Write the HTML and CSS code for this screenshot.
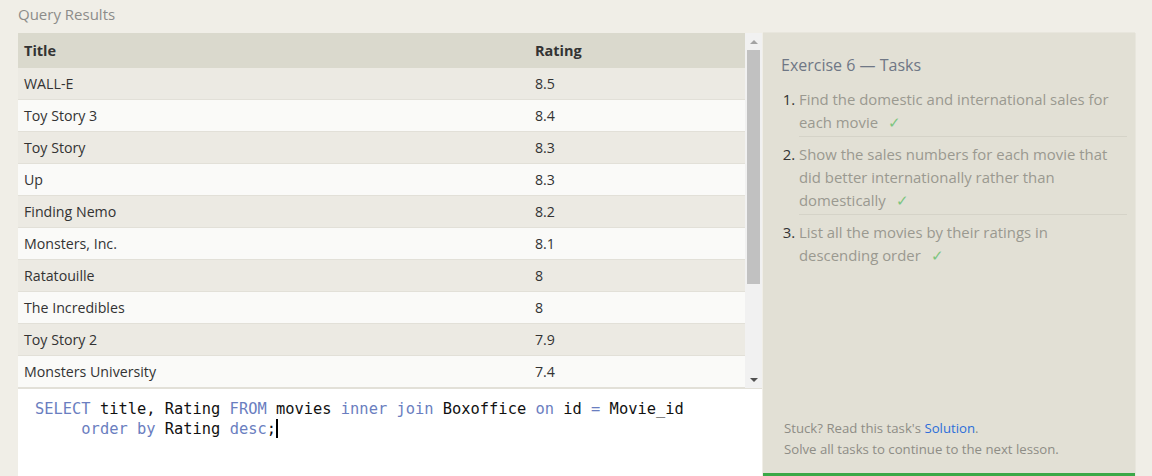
FILE: index.html
```html
<!DOCTYPE html>
<html>
<head>
<meta charset="utf-8">
<link rel="stylesheet" href="styles.css">
</head>
<body>
<div class="page">
  <div class="section-title">Query Results</div>
  <div class="main">
    <div class="left">
      <div class="results">
        <div class="table-wrap">
          <table class="results-table">
            <thead>
              <tr><th class="col-title">Title</th><th>Rating</th></tr>
            </thead>
            <tbody>
              <tr><td>WALL-E</td><td>8.5</td></tr>
              <tr><td>Toy Story 3</td><td>8.4</td></tr>
              <tr><td>Toy Story</td><td>8.3</td></tr>
              <tr><td>Up</td><td>8.3</td></tr>
              <tr><td>Finding Nemo</td><td>8.2</td></tr>
              <tr><td>Monsters, Inc.</td><td>8.1</td></tr>
              <tr><td>Ratatouille</td><td>8</td></tr>
              <tr><td>The Incredibles</td><td>8</td></tr>
              <tr><td>Toy Story 2</td><td>7.9</td></tr>
              <tr><td>Monsters University</td><td>7.4</td></tr>
            </tbody>
          </table>
        </div>
        <div class="scrollbar">
          <div class="arrow arrow-up"></div>
          <div class="track"><div class="thumb"></div></div>
          <div class="arrow arrow-down"></div>
        </div>
      </div>
      <div class="editor">
<pre class="code"><span class="kw">SELECT</span> title, Rating <span class="kw">FROM</span> movies <span class="kw">inner join</span> Boxoffice <span class="kw">on</span> id <span class="kw">=</span> Movie_id
     <span class="kw">order by</span> Rating <span class="kw">desc</span>;<span class="cursor"></span></pre>
      </div>
    </div>
    <div class="panel">
      <div class="panel-body">
        <h2 class="panel-title">Exercise 6 — Tasks</h2>
        <ol class="tasks">
          <li>Find the domestic and international sales for each movie <span class="check">✓</span></li>
          <li>Show the sales numbers for each movie that did better internationally rather than domestically <span class="check">✓</span></li>
          <li>List all the movies by their ratings in descending order <span class="check">✓</span></li>
        </ol>
      </div>
      <div class="panel-foot">
        <div>Stuck? Read this task's <a class="link">Solution</a>.</div>
        <div>Solve all tasks to continue to the next lesson.</div>
      </div>
      <div class="progress"></div>
    </div>
  </div>
</div>
</body>
</html>
```
FILE: styles.css
```css
html, body {
  margin: 0;
  padding: 0;
  background: #f0eee7;
}
body {
  font-family: "Open Sans", "Noto Sans", sans-serif;
  width: 1152px;
  height: 476px;
  overflow: hidden;
}
.page {
  padding: 0 17px 0 18px;
  display: flex;
  flex-direction: column;
  height: 476px;
  box-sizing: border-box;
}
.section-title {
  height: 33px;
  line-height: 28px;
  font-size: 15px;
  color: #8c8c8a;
}
.main {
  flex: 1;
  display: flex;
  gap: 1px;
  min-height: 0;
}
.left {
  width: 744px;
  display: flex;
  flex-direction: column;
}
.results {
  display: flex;
  height: 355px;
  border-bottom: 1px solid #e2e0d8;
}
.table-wrap {
  flex: 1;
  overflow: hidden;
}
.results-table {
  width: 100%;
  border-collapse: collapse;
  font-size: 14.2px;
  color: #333;
}
.results-table th {
  background: #dad9cd;
  text-align: left;
  font-weight: 700;
  height: 35px;
  padding: 0 6px;
  color: #333;
  font-size: 14.5px;
}
.results-table th.col-title {
  width: 499px;
}
.results-table td {
  height: 31px;
  padding: 0 6px;
  border-bottom: 1px solid #e2e0d8;
}
.results-table tbody tr:nth-child(odd) td {
  background: #eceae3;
}
.results-table tbody tr:nth-child(even) td {
  background: #fafaf8;
}
.scrollbar {
  width: 17px;
  background: #f1f1f1;
  display: flex;
  flex-direction: column;
  align-items: center;
}
.arrow {
  height: 17px;
  width: 17px;
  display: flex;
  align-items: center;
  justify-content: center;
}
.arrow-up::before {
  content: "";
  border-left: 4px solid transparent;
  border-right: 4px solid transparent;
  border-bottom: 4px solid #a3a3a3;
}
.arrow-down::before {
  content: "";
  border-left: 4px solid transparent;
  border-right: 4px solid transparent;
  border-top: 4px solid #505050;
}
.track {
  flex: 1;
  width: 13px;
}
.thumb {
  height: 234px;
  background: #c1c1c1;
}
.editor {
  flex: 1;
  background: #ffffff;
  padding: 10px 0 0 17px;
}
.code {
  margin: 0;
  font-family: "DejaVu Sans Mono", "Liberation Mono", monospace;
  font-size: 15.4px;
  line-height: 20px;
  color: #111;
}
.kw {
  color: #6a7ec0;
}
.cursor {
  display: inline-block;
  width: 2px;
  height: 19px;
  background: #000;
  vertical-align: -4px;
}
.panel {
  width: 372px;
  background: #e2e0d5;
  display: flex;
  flex-direction: column;
  box-shadow: 0 -1px 0 #e8e6dd, 1px 0 0 #e8e6dd;
}
.panel-body {
  flex: 1;
  padding: 19px 8px 0 18px;
}
.panel-title {
  margin: 0 0 10px 0;
  font-size: 16px;
  font-weight: 400;
  color: #6f7785;
  line-height: 26px;
}
.tasks {
  margin: 0;
  padding: 0 0 0 18px;
  font-size: 14.9px;
  line-height: 23px;
  color: #9a9990;
}
.tasks li {
  padding: 0 0 2px 0;
  margin-bottom: 6px;
  border-bottom: 1px solid #d5d3c8;
}
.tasks li:last-child {
  border-bottom: none;
}
.tasks li::marker {
  color: #333;
}
.check {
  color: #7cc57f;
  margin-left: 6px;
}
.panel-foot {
  padding: 0 0 13px 21px;
  font-size: 13.2px;
  line-height: 21px;
  color: #8e8d86;
}
.link {
  color: #2c6ed9;
}
.progress {
  height: 3px;
  background: #3ba848;
}
```
